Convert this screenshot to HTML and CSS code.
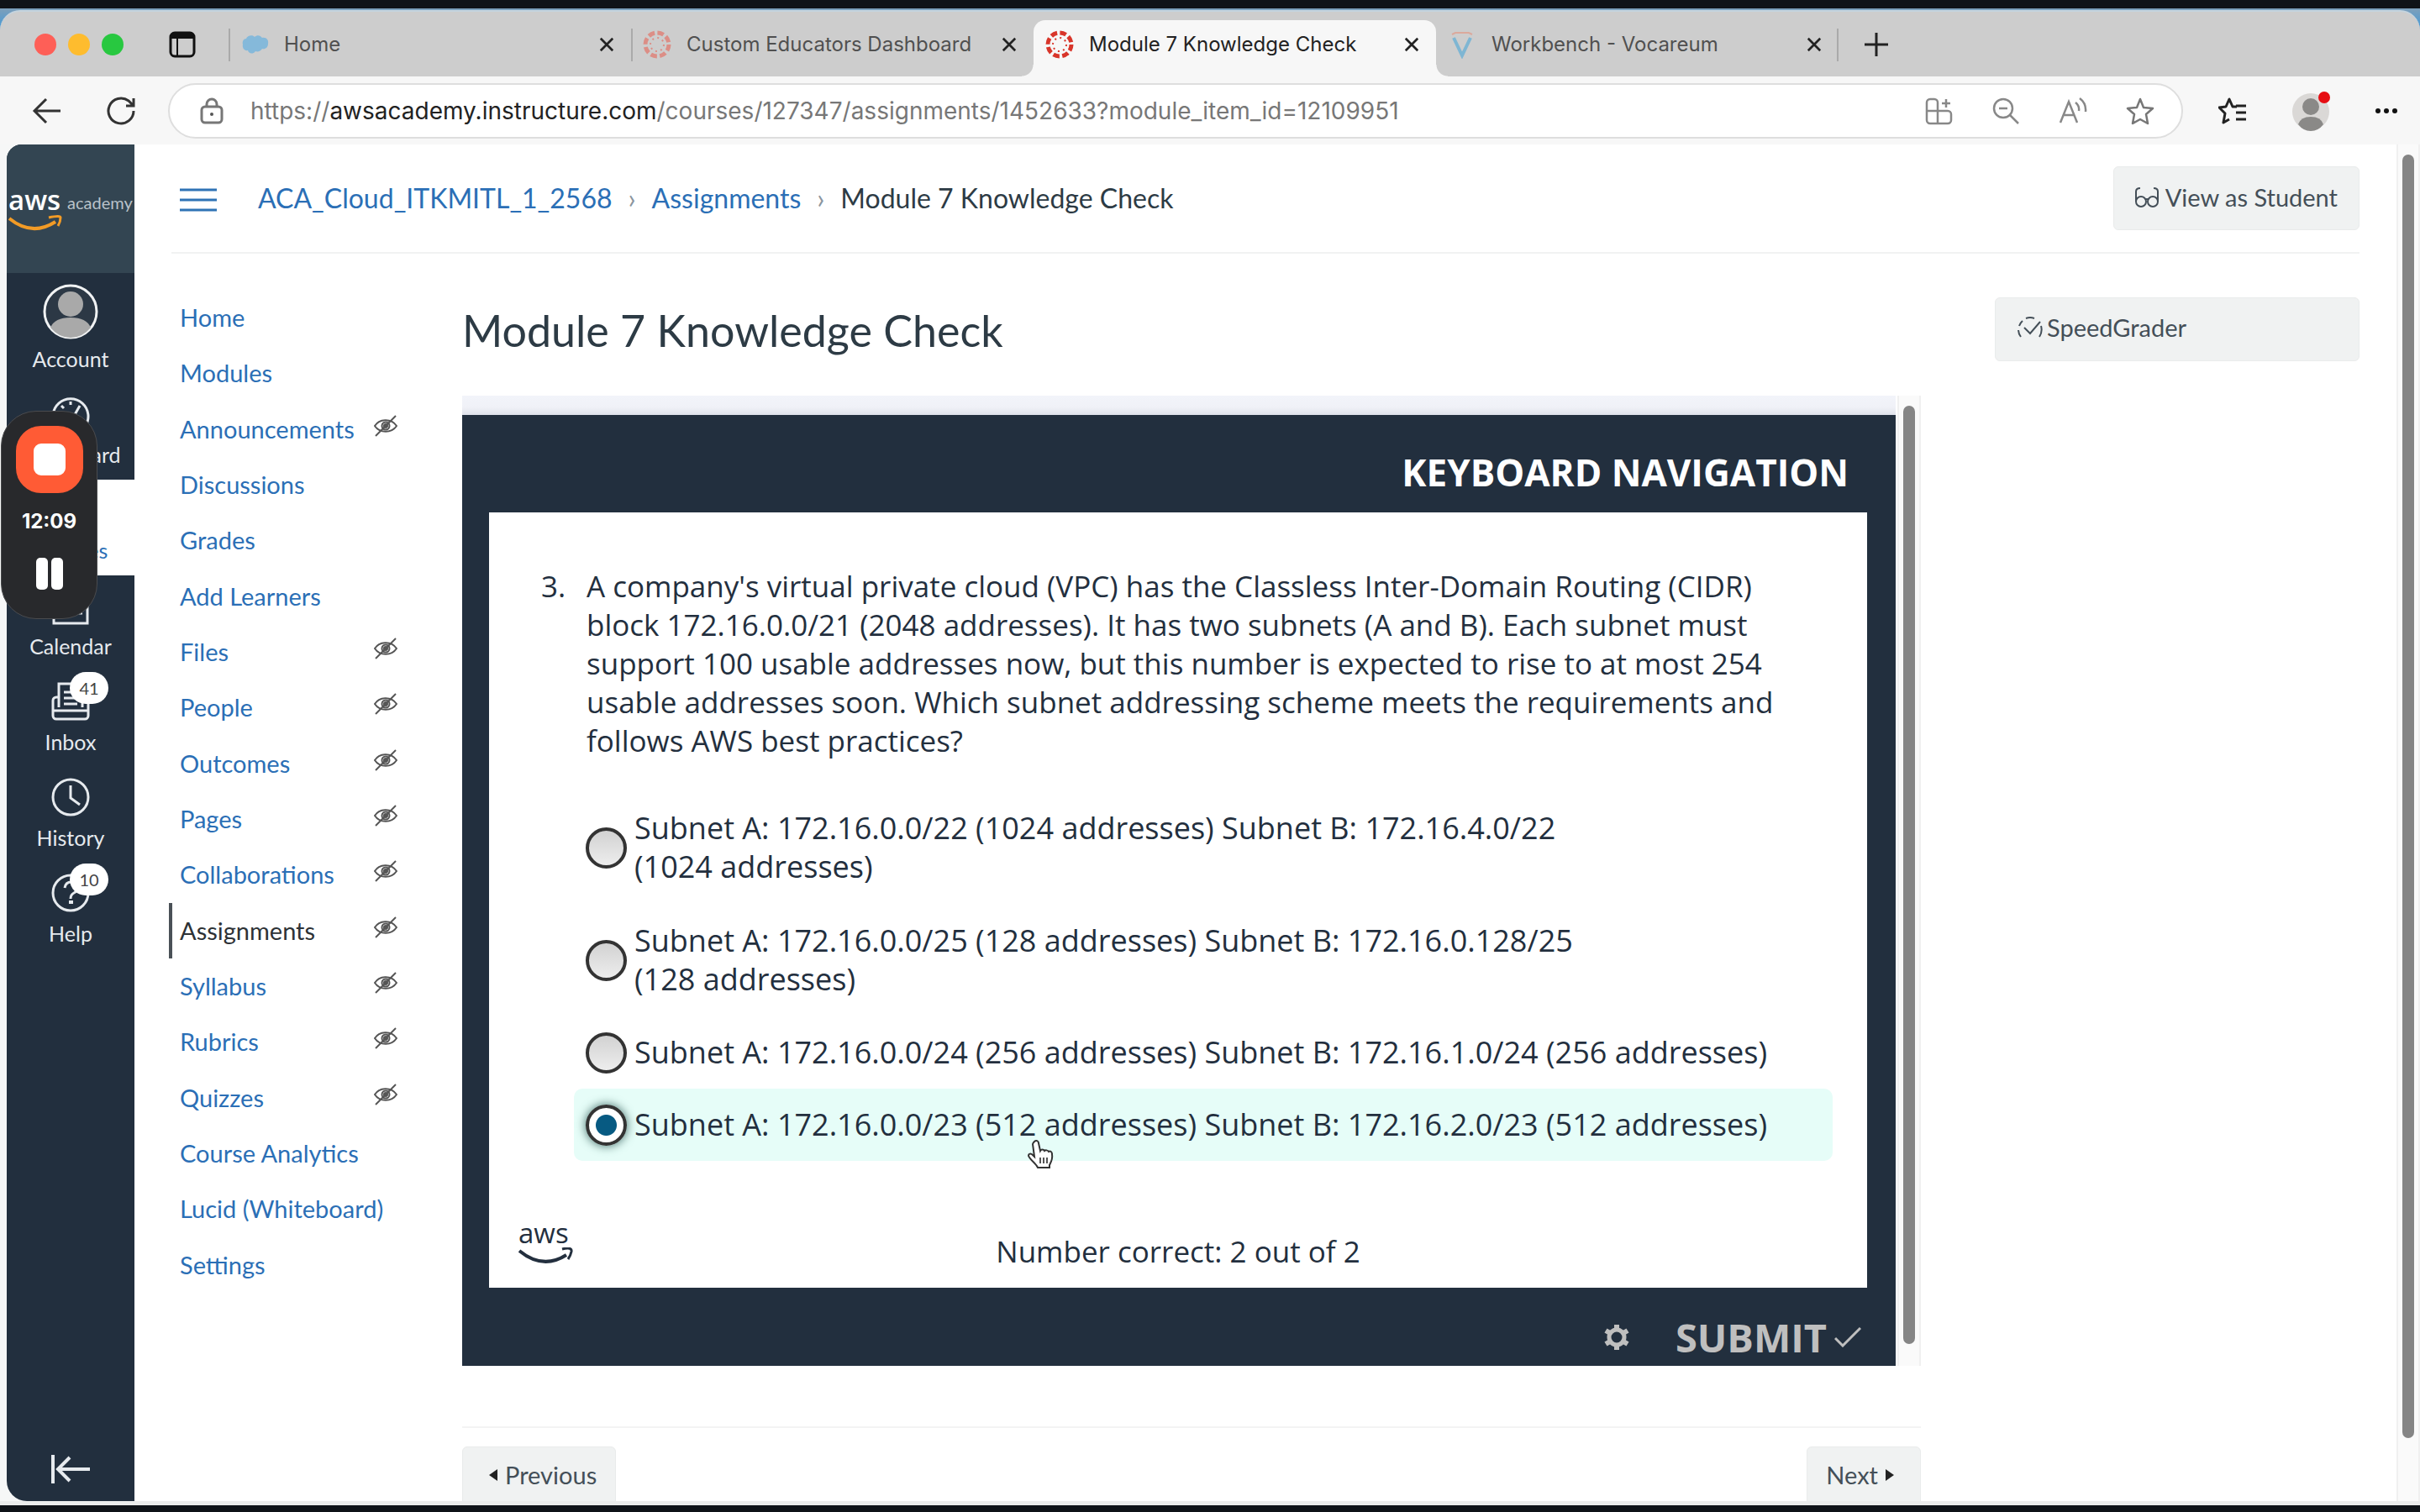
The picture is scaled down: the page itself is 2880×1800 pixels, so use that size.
FILE: index.html
```html
<!DOCTYPE html>
<html lang="en">
<head>
<meta charset="utf-8">
<meta name="viewport" content="width=device-width, initial-scale=1">
<title>Module 7 Knowledge Check</title>
<link rel="stylesheet" href="styles.css">
</head>
<body>
<svg class="sprite" aria-hidden="true">
  <symbol id="i-close" viewBox="0 0 20 20"><path d="M2 2 18 18M18 2 2 18" fill="none" stroke="currentColor" stroke-width="3"/></symbol>
  <symbol id="i-canvas" viewBox="0 0 34 34">
    <circle cx="17" cy="17" r="14" fill="none" stroke="currentColor" stroke-width="5" stroke-dasharray="7.600 3.396"/>
    <circle cx="17" cy="17" r="8" fill="none" stroke="currentColor" stroke-width="2" stroke-dasharray="2 4.28"/>
  </symbol>
  <symbol id="i-hidden" viewBox="0 0 28 26"><g fill="none" stroke="currentColor" stroke-width="2"><path d="M1 13C6 5 20 3 27 13 21 22 7 22 1 13Z"/><circle cx="14" cy="13" r="4.500"/><path d="M2 25 26 1"/></g><circle cx="14" cy="13" r="3" fill="currentColor"/></symbol>
</svg>

<div class="window">
  <header class="tabstrip">
    <div class="tabstrip-start">
      <div class="lights"><button class="light light-close" aria-label="Close window"></button><button class="light light-min" aria-label="Minimize window"></button><button class="light light-max" aria-label="Zoom window"></button></div>
      <button class="icon-btn" aria-label="Tab actions"><svg width="32" height="32" viewBox="0 0 32 32"><rect x="2" y="2" width="28" height="28" rx="5" fill="none" stroke="#111" stroke-width="3"/><path d="M2 9V7a5 5 0 0 1 5-5h18a5 5 0 0 1 5 5v2z" fill="#111"/><path d="M10 9v21" stroke="#111" stroke-width="2"/></svg></button>
    </div>
    <nav class="tabs" aria-label="Tabs">
      <div class="tab">
        <svg class="favicon" viewBox="0 0 34 34"><path d="M3 17c-1-4 1-7 4-7 1-4 8-5 10-2 3-3 7-2 9 1 5-1 8 3 7 7 0 5-4 7-7 6-2 3-5 4-8 3-3 4-8 3-9-1-4 1-7-3-6-7z" fill="#85b9da"/></svg>
        <a class="tab-title" href="#">Home</a>
        <button class="tab-close" aria-label="Close tab"><svg><use href="#i-close"/></svg></button>
      </div>
      <div class="tab">
        <svg class="favicon favicon-faded"><use href="#i-canvas"/></svg>
        <a class="tab-title" href="#">Custom Educators Dashboard</a>
        <button class="tab-close" aria-label="Close tab"><svg><use href="#i-close"/></svg></button>
      </div>
      <div class="tab tab-active">
        <svg class="favicon favicon-red"><use href="#i-canvas"/></svg>
        <a class="tab-title" href="#" aria-current="page">Module 7 Knowledge Check</a>
        <button class="tab-close" aria-label="Close tab"><svg><use href="#i-close"/></svg></button>
      </div>
      <div class="tab tab-last">
        <svg class="favicon" viewBox="0 0 34 34"><path d="M7 9 17 30 27 9" fill="none" stroke="#7fb6d3" stroke-width="4"/><path d="M5 5 9 3h16l4 2" fill="none" stroke="#dba99c" stroke-width="2"/></svg>
        <a class="tab-title" href="#">Workbench - Vocareum</a>
        <button class="tab-close" aria-label="Close tab"><svg><use href="#i-close"/></svg></button>
      </div>
      <button class="icon-btn new-tab" aria-label="New tab"><svg width="28" height="28" viewBox="0 0 28 28"><path d="M14 0v28M0 14h28" stroke="#222" stroke-width="3"/></svg></button>
    </nav>
  </header>

  <div class="toolbar">
    <button class="icon-btn" aria-label="Back"><svg width="36" height="36" viewBox="0 0 36 36"><path d="M34 18H4M17 4 3 18l14 14" fill="none" stroke="#333" stroke-width="3"/></svg></button>
    <button class="icon-btn" aria-label="Reload"><svg width="36" height="36" viewBox="0 0 36 36"><path d="M33 18A15 15 0 1 1 27 6l5 5M33 3v9h-9" fill="none" stroke="#333" stroke-width="3"/></svg></button>
    <div class="address">
      <svg class="lock" width="28" height="32" viewBox="0 0 28 32"><rect x="2" y="11" width="24" height="19" rx="4" fill="none" stroke="#777" stroke-width="3"/><path d="M8 11V8a6 6 0 0 1 12 0v3" fill="none" stroke="#777" stroke-width="3"/><circle cx="14" cy="20" r="2" fill="#555"/></svg>
      <div class="url" role="textbox" aria-label="Address" contenteditable="true" spellcheck="false">https://<span class="url-host">awsacademy.instructure.com</span>/courses/127347/assignments/1452633?module_item_id=12109951</div>
      <div class="address-actions">
        <button class="icon-btn" aria-label="Apps"><svg width="34" height="34" viewBox="0 0 34 34" fill="none" stroke="#888" stroke-width="2.500"><path d="M16 32H7a4 4 0 0 1-4-4V7a4 4 0 0 1 4-4h5a4 4 0 0 1 4 4v25M3 17h25a4 4 0 0 1 4 4v7a4 4 0 0 1-4 4H16M26 3v10M21 8h10"/></svg></button>
        <button class="icon-btn" aria-label="Zoom out"><svg width="34" height="34" viewBox="0 0 34 34" fill="none" stroke="#888" stroke-width="2.500"><circle cx="14" cy="14" r="11"/><path d="m22 22 10 10M9 14h10"/></svg></button>
        <button class="icon-btn" aria-label="Read aloud"><svg width="34" height="34" viewBox="0 0 34 34" fill="none" stroke="#888" stroke-width="2.500"><path d="M2 31 12 6l10 25M6 22h12M20 7q5 4 4 10M25 2q8 6 7 16"/></svg></button>
        <button class="icon-btn" aria-label="Add to favorites"><svg width="34" height="34" viewBox="0 0 34 34" fill="none" stroke="#777" stroke-width="2.500"><path d="m17 3 4 10 11 1-8 7 2 11-9-5-9 5 2-11-8-7 11-1z" stroke-linejoin="round"/></svg></button>
      </div>
    </div>
    <div class="toolbar-end">
      <button class="icon-btn" aria-label="Favorites"><svg width="34" height="34" viewBox="0 0 34 34" fill="none" stroke="#222" stroke-width="3"><path d="m22 12-5 0-4-9-4 9-8 1 7 7-2 11 7-4M21 11h12M21 19h12M21 27h12" stroke-linejoin="round"/></svg></button>
      <button class="icon-btn" aria-label="Profile"><svg width="46" height="50" viewBox="0 0 46 50"><circle cx="23" cy="26" r="22" fill="#dad8d6"/><circle cx="23" cy="20" r="10" fill="#8a8987"/><path d="M8 41q3-9 15-9t15 9q-6 8-15 8t-15-8" fill="#8a8987"/><circle cx="39" cy="9" r="7" fill="#e60d12"/></svg></button>
      <button class="icon-btn" aria-label="More"><svg width="28" height="8" viewBox="0 0 28 8" fill="#111"><circle cx="4" cy="4" r="3"/><circle cx="14" cy="4" r="3"/><circle cx="24" cy="4" r="3"/></svg></button>
    </div>
  </div>

  <div class="viewport">
    <nav class="global-nav" aria-label="Global">
      <a class="brand" href="#" aria-label="aws academy">
        <span class="brand-aws">aws<svg width="64" height="20" viewBox="0 0 64 20" fill="none" stroke="#f29b26" stroke-width="4"><path d="M1 4Q28 26 56 8"/><path d="M48 3q14-3 14 0 0 5-3 10" stroke-width="3"/></svg></span>
        <span class="brand-academy">academy</span>
      </a>
      <a class="gn-item gn-account" href="#"><svg width="66" height="66" viewBox="0 0 66 66"><circle cx="33" cy="33" r="31" fill="#2c3845" stroke="#f0f2f3" stroke-width="3"/><circle cx="33" cy="24" r="15" fill="#a9a9a9"/><path d="M9 52q5-12 24-12t24 12Q47 64 33 64T9 52" fill="#a9a9a9"/></svg>Account</a>
      <a class="gn-item" href="#"><svg width="46" height="46" viewBox="0 0 46 46" fill="none" stroke="#e6eaee" stroke-width="3"><path d="M6 38A21 21 0 1 1 40 38zM23 8v4M12 13l3 3M34 13l-8 14"/></svg>Dashboard</a>
      <a class="gn-item gn-current" href="#"><svg width="46" height="46" viewBox="0 0 46 46" fill="none" stroke="currentColor" stroke-width="3"><path d="M10 4h28v38H10a4 4 0 0 1 0-8h28"/></svg>Courses</a>
      <a class="gn-item" href="#"><svg width="46" height="46" viewBox="0 0 46 46" fill="none" stroke="#e6eaee" stroke-width="3"><path d="M3 6h40v38H3zM3 16h40M13 1v9M33 1v9M30 32h7"/></svg>Calendar</a>
      <a class="gn-item" href="#"><span class="gn-icon"><svg width="46" height="46" viewBox="0 0 46 46" fill="none" stroke="#e6eaee" stroke-width="3"><path d="M9 30V2h28v28M9 18H6a4 4 0 0 0-4 4v18a4 4 0 0 0 4 4h34a4 4 0 0 0 4-4V22a4 4 0 0 0-4-4h-3M2 34h42M15 12h10M15 19h16M15 26h16"/></svg><span class="badge">41</span></span>Inbox</a>
      <a class="gn-item" href="#"><svg width="48" height="46" viewBox="0 0 48 46" fill="none" stroke="#e6eaee" stroke-width="3"><circle cx="24" cy="23" r="21"/><path d="M24 9v15l11 8"/></svg>History</a>
      <a class="gn-item" href="#"><span class="gn-icon"><svg width="46" height="46" viewBox="0 0 46 46" fill="none" stroke="#e6eaee" stroke-width="3"><circle cx="23" cy="23" r="21"/><path d="M16 17q1-7 8-7t7 7q0 4-4 6t-4 7"/><path d="M21 34h5" stroke-width="4"/></svg><span class="badge">10</span></span>Help</a>
      <button class="collapse" aria-label="Minimize navigation"><svg width="48" height="34" viewBox="0 0 48 34" fill="none" stroke="#e6eaee" stroke-width="4"><path d="M3 0v34M47 17H9M23 3 9 17l14 14"/></svg></button>
    </nav>

    <div class="page">
      <div class="crumb-bar">
        <button class="menu-btn" aria-label="Hide course menu"><svg width="44" height="30" viewBox="0 0 44 30" stroke="#2f73b5" stroke-width="3"><path d="M0 3h44M0 15h44M0 27h44"/></svg></button>
        <nav class="crumbs" aria-label="Breadcrumb"><a href="#">ACA_Cloud_ITKMITL_1_2568</a><span class="sep">›</span><a href="#">Assignments</a><span class="sep">›</span><span>Module 7 Knowledge Check</span></nav>
        <button class="btn btn-student"><svg width="28" height="26" viewBox="0 0 28 26" fill="none" stroke="#444f58" stroke-width="2"><circle cx="7" cy="18" r="6"/><circle cx="21" cy="18" r="6"/><path d="M1 18V6q0-4 5-4M27 18V6q0-4-5-4M12 16q2-2 4 0"/></svg>View as Student</button>
      </div>

      <div class="columns">
        <nav class="course-menu" aria-label="Course">
          <a href="#">Home</a>
          <a href="#">Modules</a>
          <a href="#">Announcements<svg><use href="#i-hidden"/></svg></a>
          <a href="#">Discussions</a>
          <a href="#">Grades</a>
          <a href="#">Add Learners</a>
          <a href="#">Files<svg><use href="#i-hidden"/></svg></a>
          <a href="#">People<svg><use href="#i-hidden"/></svg></a>
          <a href="#">Outcomes<svg><use href="#i-hidden"/></svg></a>
          <a href="#">Pages<svg><use href="#i-hidden"/></svg></a>
          <a href="#">Collaborations<svg><use href="#i-hidden"/></svg></a>
          <a class="current" href="#" aria-current="page">Assignments<svg><use href="#i-hidden"/></svg></a>
          <a href="#">Syllabus<svg><use href="#i-hidden"/></svg></a>
          <a href="#">Rubrics<svg><use href="#i-hidden"/></svg></a>
          <a href="#">Quizzes<svg><use href="#i-hidden"/></svg></a>
          <a href="#">Course Analytics</a>
          <a href="#">Lucid (Whiteboard)</a>
          <a href="#">Settings</a>
        </nav>

        <main class="content">
          <h1>Module 7 Knowledge Check</h1>
          <div class="frame">
            <form class="quiz">
              <div class="quiz-head"><button type="button">KEYBOARD NAVIGATION</button></div>
              <div class="panel">
                <div class="question" id="question">
                  <span class="q-number">3.</span>
                  <p>A company's virtual private cloud (VPC) has the Classless Inter-Domain Routing (CIDR)<br>block 172.16.0.0/21 (2048 addresses). It has two subnets (A and B). Each subnet must<br>support 100 usable addresses now, but this number is expected to rise to at most 254<br>usable addresses soon. Which subnet addressing scheme meets the requirements and<br>follows AWS best practices?</p>
                </div>
                <div class="options" role="radiogroup" aria-labelledby="question">
                  <label class="option option-wrapped"><input type="radio" name="answer"><span>Subnet A: 172.16.0.0/22 (1024 addresses) Subnet B: 172.16.4.0/22<br>(1024 addresses)</span></label>
                  <label class="option option-wrapped"><input type="radio" name="answer"><span>Subnet A: 172.16.0.0/25 (128 addresses) Subnet B: 172.16.0.128/25<br>(128 addresses)</span></label>
                  <label class="option"><input type="radio" name="answer"><span>Subnet A: 172.16.0.0/24 (256 addresses) Subnet B: 172.16.1.0/24 (256 addresses)</span></label>
                  <label class="option option-chosen"><input type="radio" name="answer" checked><span>Subnet A: 172.16.0.0/23 (512 addresses) Subnet B: 172.16.2.0/23 (512 addresses)</span>
                    <svg class="pointer" width="32" height="36" viewBox="0 0 32 36"><path d="M9 3c2-2 5-1 5 2l2 9c1-2 4-2 5 0 1-1 4-1 5 1 2-1 4 0 4 3 1 6-1 9-3 13v3H13c-2-5-9-9-11-14 0-3 3-3 5-1l2 2L7 6c0-1 1-2 2-3z" fill="#fff" stroke="#333" stroke-width="2"/><path d="M16 22v7M20 22v7M24 22v7" stroke="#555" stroke-width="2"/></svg>
                  </label>
                </div>
                <div class="panel-foot">
                  <span class="aws-mark">aws<svg width="66" height="20" viewBox="0 0 66 20" fill="none" stroke="#232f3e" stroke-width="4"><path d="M1 4q28 23 56 5"/><path d="M52 2q12-3 11 3-1 5-4 9" stroke-width="3"/></svg></span>
                  <output>Number correct: 2 out of 2</output>
                </div>
              </div>
              <div class="quiz-foot">
                <button type="button" aria-label="Settings"><svg width="32" height="32" viewBox="0 0 32 32" fill="none" stroke="#bfbfbf"><circle cx="16" cy="16" r="9" stroke-width="5"/><path d="M16 1v6M16 25v6M3 8l5 3M24 21l5 3M3 24l5-3M24 11l5-3" stroke-width="6"/></svg></button>
                <button class="submit" type="submit">SUBMIT<svg width="32" height="24" viewBox="0 0 32 24" fill="none" stroke="#bfbfbf" stroke-width="3"><path d="m1 13 9 9L31 1"/></svg></button>
              </div>
            </form>
            <div class="scroll frame-scroll"><span class="thumb"></span></div>
          </div>
          <div class="pager">
            <button class="btn btn-page btn-prev"><svg width="10" height="14" viewBox="0 0 10 14"><path d="M10 0v14L0 7z" fill="#222"/></svg>Previous</button>
            <button class="btn btn-page btn-next">Next<svg width="10" height="14" viewBox="0 0 10 14"><path d="M0 0v14l10-7z" fill="#222"/></svg></button>
          </div>
        </main>

        <aside class="side">
          <a class="btn btn-grader" href="#"><svg width="32" height="28" viewBox="0 0 32 28" fill="none" stroke="#444f58" stroke-width="2"><path d="M5 25a14 14 0 0 1-3-8M3 12a14 14 0 0 1 4-6M11 3a14 14 0 0 1 10 0M29 12q2 7-2 13"/><path d="m9 14 7 7L28 7"/></svg>SpeedGrader</a>
        </aside>
      </div>
    </div>
    <div class="scroll page-scroll"><span class="thumb"></span></div>
  </div>
</div>

<div class="recorder" role="group" aria-label="Recording">
  <button class="stop" aria-label="Stop recording"></button>
  <time>12:09</time>
  <button class="pause" aria-label="Pause recording"><span></span><span></span></button>
</div>
</body>
</html>
```
FILE: styles.css
```css
* { box-sizing: border-box; }

html, body { height: 100%; }

body {
  margin: 0;
  padding: 10px 0 8px;
  background: #0f1318;
  color: #2d3b45;
  font-family: Lato, "Liberation Sans", sans-serif;
  font-size: 29px;
  overflow: hidden;
}

a { color: #2b6fb6; text-decoration: none; }

button {
  margin: 0;
  padding: 0;
  border: 0;
  background: none;
  color: inherit;
  font: inherit;
  cursor: pointer;
}

svg { display: block; flex: none; }

.sprite { position: absolute; width: 0; height: 0; }

.window {
  display: flex;
  flex-direction: column;
  height: 100%;
  background: linear-gradient(#7d9fba, #4f9bd2 20px, #ebecec 60px);
}

/* Browser tabs */
.tabstrip {
  display: flex;
  flex: none;
  height: 79px;
  margin-top: 2px;
  border-top: 2px solid #c5d4de;
  border-radius: 24px 24px 0 0;
  background: #cdcdcd;
  font: 24px/32px Inter, "Liberation Sans", sans-serif;
}

.tabstrip-start {
  display: flex;
  flex: none;
  align-items: center;
  gap: 54px;
  width: 272px;
  padding-left: 41px;
}

.lights { display: flex; gap: 14px; }
.light { width: 26px; height: 26px; border-radius: 50%; }
.light-close { background: #fe5f57; }
.light-min { background: #febc2e; }
.light-max { background: #28c840; }

.icon-btn { display: flex; flex: none; align-items: center; justify-content: center; }

.tabs { display: flex; flex: 1; min-width: 0; }

.tab {
  position: relative;
  display: flex;
  flex: 0 1 479px;
  align-items: center;
  min-width: 0;
  padding: 0 11px 0 14px;
}

.tab::after {
  content: "";
  position: absolute;
  left: 0;
  top: 20px;
  width: 2px;
  height: 39px;
  background: #aaa;
}

.tab-active { z-index: 1; }

.tab-active::after {
  left: -14px;
  right: -14px;
  top: auto;
  bottom: 0;
  z-index: -1;
  width: auto;
  height: 14px;
  background:
    radial-gradient(circle at 0 0, transparent 13px, #f7f7f7 14px) left / 14px 14px no-repeat,
    radial-gradient(circle at 100% 0, transparent 13px, #f7f7f7 14px) right / 14px 14px no-repeat;
}

.tab-active::before {
  content: "";
  position: absolute;
  inset: 10px 0 0;
  z-index: -1;
  border-radius: 14px 14px 0 0;
  background: #f7f7f7;
}

.tab-last::after { left: auto; right: 0; }

.favicon { width: 34px; height: 34px; margin-right: 18px; }
.favicon-faded { color: #dc8e86; }
.favicon-red { color: #d8352a; }

.tab-title { flex: 1; overflow: hidden; color: #505050; white-space: nowrap; }
.tab-active .tab-title { color: #222; }

.tab-close { display: flex; flex: none; align-items: center; justify-content: center; width: 36px; height: 36px; color: #222; }
.tab-close svg { width: 18px; height: 18px; }

.new-tab { padding: 0 31px; }

/* Address bar row */
.toolbar {
  display: flex;
  flex: none;
  align-items: center;
  gap: 36px;
  height: 81px;
  padding: 0 26px 0 38px;
  background: #f7f7f7;
}

.toolbar .icon-btn + .icon-btn { margin-left: 16px; }

.address {
  display: flex;
  flex: 1;
  align-items: center;
  height: 66px;
  margin: 0 6px 0 2px;
  padding: 0 32px 0 36px;
  border: 2px solid #dedede;
  border-radius: 33px;
  background: #fff;
}

.url {
  flex: 1;
  min-width: 0;
  padding-left: 32px;
  overflow: hidden;
  color: #777;
  font: 28px/36px Inter, "Liberation Sans", sans-serif;
  white-space: nowrap;
}

.url-host { color: #222; }

.address-actions { display: flex; gap: 30px; }

.toolbar-end { display: flex; align-items: center; gap: 37px; }

/* Page below the browser chrome */
.viewport {
  display: flex;
  flex: 1;
  min-height: 0;
  margin-bottom: 5px;
  padding-left: 8px;
  background: #f6f7f7;
}

.global-nav {
  display: flex;
  flex: none;
  flex-direction: column;
  width: 152px;
  border-radius: 18px 0 0 24px;
  background: #222f3e;
  overflow: hidden;
}

.brand {
  display: flex;
  flex: none;
  align-items: flex-start;
  gap: 6px;
  height: 153px;
  padding: 48px 0 0 2px;
  background: #334552;
  color: #fff;
}

.brand-aws { width: 64px; font: 600 33px/36px "Open Sans", sans-serif; }
.brand-academy { color: #b9c2c9; font-size: 20px; line-height: 42px; }

.gn-item {
  display: flex;
  flex: none;
  flex-direction: column;
  align-items: center;
  gap: 11px;
  height: 114px;
  padding-top: 13px;
  color: #e6eaee;
  font-size: 25px;
  line-height: 28px;
}

.gn-account { gap: 9px; height: 132px; }
.gn-current { background: #fff; color: #2b6fb6; }

.gn-icon { position: relative; }

.badge {
  position: absolute;
  left: 22px;
  top: -12px;
  width: 46px;
  height: 38px;
  border-radius: 19px;
  background: #fff;
  color: #444;
  font-size: 20px;
  line-height: 38px;
  text-align: center;
}

.collapse { display: flex; justify-content: center; margin-top: auto; padding-bottom: 21px; }

.page {
  flex: 1;
  min-width: 0;
  padding: 0 44px;
  background: #fff;
  overflow: hidden;
}

.crumb-bar {
  display: flex;
  align-items: center;
  height: 130px;
  padding-left: 10px;
  border-bottom: 2px solid #f1f2f2;
}

.menu-btn { padding-top: 4px; }

.crumbs {
  display: flex;
  flex: 1;
  gap: 19px;
  margin-left: 49px;
  font-size: 32px;
  line-height: 40px;
}

.sep { color: #8b959e; }

.btn {
  display: flex;
  align-items: center;
  border: 1px solid #e9ebeb;
  border-radius: 6px;
  background: #f0f2f2;
  color: #444f58;
  line-height: 36px;
}

.btn-student { gap: 8px; height: 76px; padding: 0 25px 2px; }

.columns { display: flex; align-items: flex-start; margin-left: -3px; }

.course-menu {
  display: grid;
  flex: none;
  grid-auto-rows: 1fr;
  width: 272px;
  min-height: 1194px;
  margin: 43px 77px 0 0;
  line-height: 36px;
}

.course-menu a {
  display: flex;
  align-items: center;
  justify-content: space-between;
  padding-left: 9px;
  border-left: 4px solid transparent;
}

.course-menu .current { border-color: #4a5157; color: #2d3236; }

.course-menu svg { width: 28px; height: 26px; margin-bottom: 8px; color: #555; }

.content { flex: 1; min-width: 0; }

h1 { margin: 59px 0 46px; font-size: 52px; font-weight: 400; line-height: 64px; }

.frame { display: flex; }

.quiz {
  flex: 1;
  min-width: 0;
  padding-top: 23px;
  border-right: 2px solid #fff;
  background: linear-gradient(#f2f4fa, #f0f1f7 14px, #dfe2ea 23px, #222f3e 23px);
  color: #232f3e;
  font: 35px/46px "Open Sans", "Noto Sans", sans-serif;
}

.quiz-head {
  display: flex;
  align-items: center;
  justify-content: flex-end;
  height: 116px;
  padding: 20px 56px 0 0;
  color: #fff;
  font-size: 44px;
  font-weight: 700;
}

.panel { margin: 0 34px 0 32px; padding: 65px 41px 20px 62px; background: #fff; }

.question { display: flex; }
.question p { margin: 0; white-space: nowrap; }
.q-number { flex: none; width: 54px; }

.options { margin: 37px 0 85px 39px; font-size: 36px; }

.option {
  position: relative;
  display: flex;
  align-items: center;
  gap: 9px;
  padding: 20px 14px;
  border-radius: 10px;
  white-space: nowrap;
}

.option-wrapped { padding-top: 21px; padding-bottom: 21px; }
.option-chosen { background: #e6fdf8; }

.option input {
  appearance: none;
  flex: none;
  width: 49px;
  height: 49px;
  margin: -2px 0;
  border: 4px solid #333;
  border-radius: 50%;
  background: linear-gradient(#d2d2d2, #ededed);
}

.option input:checked {
  background: radial-gradient(circle, #075a82 0 12px, #fff 13px);
  box-shadow: 0 0 12px #3f6b66;
}

.pointer { position: absolute; left: 539px; top: 60px; }

.panel-foot { display: grid; grid-template-columns: 1fr auto 1fr; align-items: center; }
.panel-foot output { margin-right: 21px; }

.aws-mark {
  display: block;
  margin: -32px 0 -8px -27px;
  font: 500 33px/34px "Open Sans", sans-serif;
}

.quiz-foot {
  display: flex;
  align-items: center;
  justify-content: flex-end;
  gap: 54px;
  height: 93px;
  padding: 24px 41px 0 0;
  color: #bfbfbf;
}

.submit { display: flex; align-items: center; gap: 9px; font-size: 47px; font-weight: 700; line-height: 56px; }

.scroll { display: flex; flex: none; width: 28px; border: solid #f0f0f0; border-width: 0 2px; background: #fafafa; }
.thumb { flex: 1; border-radius: 8px; background: #858585; }
.frame-scroll { padding: 12px 5px 26px; }
.page-scroll { padding: 12px 5px 75px; }

.pager {
  display: flex;
  justify-content: space-between;
  margin-top: 72px;
  padding-top: 22px;
  border-top: 2px solid #f3f3f3;
}

.btn-page { gap: 9px; height: 74px; padding-bottom: 6px; }
.btn-prev { padding-left: 31px; padding-right: 22px; }
.btn-next { padding-left: 22px; padding-right: 31px; }

.side { flex: none; width: 434px; margin: 52px 0 0 88px; }
.btn-grader { gap: 4px; height: 76px; padding: 0 25px 4px; }

/* Floating recorder control */
.recorder {
  position: absolute;
  left: 1px;
  top: 489px;
  display: flex;
  flex-direction: column;
  align-items: center;
  width: 115px;
  height: 248px;
  padding-top: 17px;
  border: 1px solid #4a4b4e;
  border-radius: 42px;
  background: #28292c;
  color: #fff;
  font: 700 24px/30px Inter, sans-serif;
}

.stop { width: 80px; height: 80px; border: 21px solid #ff5b35; border-radius: 30px; background: #fff; }
.recorder time { margin: 19px 0 28px; }
.pause { display: flex; gap: 4px; }
.pause span { width: 14px; height: 38px; border-radius: 5px; background: #fff; }
```
